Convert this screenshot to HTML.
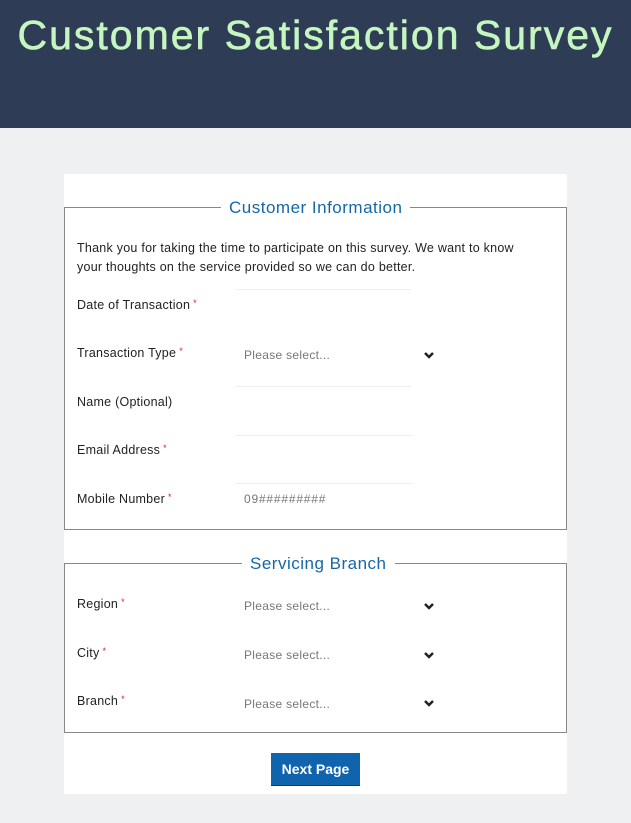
<!DOCTYPE html>
<html><head><style>
body{margin:0;width:631px;height:823px;background:#eff0f2;font-family:"Liberation Sans",sans-serif;position:relative;overflow:hidden}
.hdr{position:absolute;left:0;top:0;width:631px;height:128px;background:#2e3d55}
.hdr h1{margin:0;position:absolute;top:12px;width:100%;text-align:center;font-weight:normal;font-size:41px;color:#c6f6bf;letter-spacing:2px;-webkit-text-stroke:0.6px #c6f6bf}
.card{position:absolute;left:64px;top:174px;width:503px;height:620px;background:#fff}
.fs{position:absolute;left:64px;width:501px;border:1px solid #888;}
.lg{position:absolute;top:-10px;background:#fff;color:#1567a8;font-size:17px;padding:0 8px;letter-spacing:0.5px}
.t{position:absolute;font-size:12.5px;color:#222;letter-spacing:0.25px}
.r{color:#d22;font-size:9px;vertical-align:top;margin-left:3px}
.ph{position:absolute;left:244px;font-size:12px;color:#777;letter-spacing:0.3px}
.ln{position:absolute;left:236px;width:175px;height:1px;background:#eee}
.ch{position:absolute;left:423px}
.btn{position:absolute;left:271px;top:753px;width:89px;height:32px;background:#0f64ad;color:#fff;font-weight:bold;font-size:14px;text-align:center;line-height:32px;border-bottom:1px solid #0a3f70}
</style></head><body>
<div class="hdr"><h1>Customer Satisfaction Survey</h1></div>
<div class="card"></div>
<div class="fs" style="top:207px;height:321px"><div class="lg" style="left:156px">Customer Information</div></div>
<div class="t" style="left:77px;top:239px;line-height:19px;width:462px">Thank you for taking the time to participate on this survey. We want to know your thoughts on the service provided so we can do better.</div>
<div class="ln" style="top:289px"></div>
<div class="t" style="left:77px;top:298px">Date of Transaction<span class="r">*</span></div>
<div class="t" style="left:77px;top:346px">Transaction Type<span class="r">*</span></div>
<div class="ph" style="top:348px">Please select...</div>
<div class="ln" style="top:386px"></div>
<div class="t" style="left:77px;top:395px">Name (Optional)</div>
<div class="ln" style="top:435px"></div>
<div class="t" style="left:77px;top:443px">Email Address<span class="r">*</span></div>
<div class="ln" style="top:483px"></div>
<div class="t" style="left:77px;top:492px">Mobile Number<span class="r">*</span></div>
<div class="ph" style="top:492px;letter-spacing:0.8px">09#########</div>
<div class="fs" style="top:563px;height:168px"><div class="lg" style="left:177px">Servicing Branch</div></div>
<div class="t" style="left:77px;top:597px">Region<span class="r">*</span></div>
<div class="ph" style="top:599px">Please select...</div>
<div class="t" style="left:77px;top:646px">City<span class="r">*</span></div>
<div class="ph" style="top:648px">Please select...</div>
<div class="t" style="left:77px;top:694px">Branch<span class="r">*</span></div>
<div class="ph" style="top:697px">Please select...</div>
<svg class="ch" style="top:350px" width="12" height="10"><path d="M2 3l4 4 4-4" stroke="#222" stroke-width="2.5" fill="none"/></svg>
<svg class="ch" style="top:601px" width="12" height="10"><path d="M2 3l4 4 4-4" stroke="#222" stroke-width="2.5" fill="none"/></svg>
<svg class="ch" style="top:650px" width="12" height="10"><path d="M2 3l4 4 4-4" stroke="#222" stroke-width="2.5" fill="none"/></svg>
<svg class="ch" style="top:698px" width="12" height="10"><path d="M2 3l4 4 4-4" stroke="#222" stroke-width="2.5" fill="none"/></svg>
<div class="btn">Next Page</div>
</body></html>
